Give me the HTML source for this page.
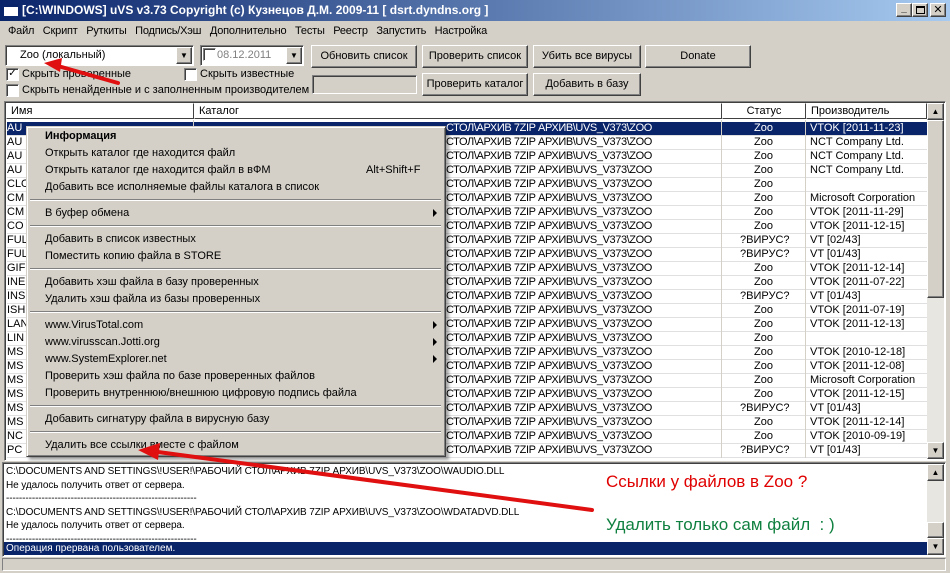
<!DOCTYPE html>
<html><head><meta charset="utf-8"><style>
*{box-sizing:border-box;margin:0;padding:0}
body{width:950px;height:573px;background:#d4d0c8;font-family:"Liberation Sans","DejaVu Sans",sans-serif;font-size:11px;color:#000;position:relative;overflow:hidden}
.a{position:absolute;white-space:nowrap}
.btn{position:absolute;border:1px solid;border-color:#fff #404040 #404040 #fff;box-shadow:inset -1px -1px 0 #808080;text-align:center;background:#d4d0c8}
.sunk{position:absolute;border:1px solid;border-color:#808080 #fff #fff #808080;box-shadow:inset 1px 1px 0 #404040}
.cb{position:absolute;width:13px;height:13px;background:#fff;border:1px solid;border-color:#808080 #fff #fff #808080;box-shadow:inset 1px 1px 0 #404040}
.hd{position:absolute;top:103px;height:16px;border:1px solid;border-color:#fff #404040 #404040 #fff;padding-left:4px;line-height:14px}
.row{position:absolute;left:7px;width:920px;height:14px;line-height:13px;border-bottom:1px solid #e0e0e0}
.row span{position:absolute;top:0}
.row span:nth-child(2){letter-spacing:-0.4px}
.mi{position:absolute;left:45px;line-height:14px}
.sep{position:absolute;left:30px;width:411px;height:2px;border-top:1px solid #808080;border-bottom:1px solid #fff}
.arr{position:absolute;left:433px;width:0;height:0;border-left:4px solid #000;border-top:4px solid transparent;border-bottom:4px solid transparent}
</style></head><body>
<div class="a" style="left:0;top:0;width:950px;height:21px;background:linear-gradient(90deg,#0a246a,#a6caf0)"></div>
<div class="a" style="left:4px;top:4px;width:14px;height:12px;background:#fff;border-top:3px solid #0a246a"></div>
<div class="a" style="left:22px;top:3px;color:#fff;font-weight:bold;font-size:12px">[C:\WINDOWS] uVS v3.73 Copyright (c) Кузнецов Д.М. 2009-11 [ dsrt.dyndns.org ]</div>
<div class="btn" style="left:896px;top:3px;width:16px;height:14px;font-size:10px;line-height:10px;font-weight:bold">_</div>
<div class="btn" style="left:912px;top:3px;width:16px;height:14px"><div style="position:absolute;left:3px;top:2px;width:9px;height:8px;border:1px solid #000;border-top-width:2px"></div></div>
<div class="btn" style="left:930px;top:3px;width:16px;height:14px;font-weight:bold;line-height:12px">✕</div>
<div class="a" style="left:8px;top:25px;word-spacing:0;letter-spacing:-0.2px">Файл&nbsp;&nbsp; Скрипт&nbsp;&nbsp; Руткиты&nbsp;&nbsp; Подпись/Хэш&nbsp;&nbsp; Дополнительно&nbsp;&nbsp; Тесты&nbsp;&nbsp; Реестр&nbsp;&nbsp; Запустить&nbsp;&nbsp; Настройка</div>
<div class="sunk" style="left:5px;top:45px;width:189px;height:21px;background:#fff"></div>
<div class="a" style="left:20px;top:49px">Zoo (локальный)</div>
<div class="btn" style="left:176px;top:47px;width:16px;height:17px;font-size:8px;line-height:15px">▼</div>
<div class="sunk" style="left:200px;top:45px;width:104px;height:21px;background:#fff"></div>
<div class="cb" style="left:203px;top:48px"></div>
<div class="a" style="left:217px;top:49px;color:#808080">08.12.2011</div>
<div class="btn" style="left:286px;top:47px;width:16px;height:17px;font-size:8px;line-height:15px">▼</div>
<div class="btn" style="left:311px;top:45px;width:106px;height:23px;line-height:21px">Обновить список</div>
<div class="btn" style="left:422px;top:45px;width:106px;height:23px;line-height:21px">Проверить список</div>
<div class="btn" style="left:533px;top:45px;width:108px;height:23px;line-height:21px">Убить все вирусы</div>
<div class="btn" style="left:645px;top:45px;width:106px;height:23px;line-height:21px">Donate</div>
<div class="btn" style="left:422px;top:73px;width:106px;height:23px;line-height:21px">Проверить каталог</div>
<div class="btn" style="left:533px;top:73px;width:108px;height:23px;line-height:21px">Добавить в базу</div>
<div class="sunk" style="left:312px;top:75px;width:105px;height:19px"></div>
<div class="cb" style="left:6px;top:68px;font-size:10px;line-height:10px;font-weight:bold;text-align:center">✓</div>
<div class="a" style="left:22px;top:68px">Скрыть проверенные</div>
<div class="cb" style="left:184px;top:68px"></div>
<div class="a" style="left:200px;top:68px">Скрыть известные</div>
<div class="cb" style="left:6px;top:84px"></div>
<div class="a" style="left:22px;top:84px">Скрыть ненайденные и с заполненным производителем</div>
<div class="sunk" style="left:4px;top:101px;width:942px;height:360px;background:#fff"></div>
<div class="hd" style="left:6px;width:188px">Имя</div>
<div class="hd" style="left:194px;width:528px">Каталог</div>
<div class="hd" style="left:722px;width:84px;text-align:center;padding:0">Статус</div>
<div class="hd" style="left:806px;width:121px">Производитель</div>
<div class="a" style="left:927px;top:103px;width:17px;height:356px;background:#e8e6e0"></div>
<div class="btn" style="left:927px;top:103px;width:17px;height:17px;font-size:8px;line-height:15px">▲</div>
<div class="btn" style="left:927px;top:120px;width:17px;height:178px"></div>
<div class="btn" style="left:927px;top:442px;width:17px;height:17px;font-size:8px;line-height:15px">▼</div>
<div class="row" style="top:122px;background:#0a246a;color:#fff"><span style="left:0">AU</span><span style="left:439px">СТОЛ\АРХИВ 7ZIP АРХИВ\UVS_V373\ZOO</span><span style="left:747px">Zoo</span><span style="left:803px">VTOK [2011-11-23]</span></div>
<div class="row" style="top:136px"><span style="left:0">AU</span><span style="left:439px">СТОЛ\АРХИВ 7ZIP АРХИВ\UVS_V373\ZOO</span><span style="left:747px">Zoo</span><span style="left:803px">NCT Company Ltd.</span></div>
<div class="row" style="top:150px"><span style="left:0">AU</span><span style="left:439px">СТОЛ\АРХИВ 7ZIP АРХИВ\UVS_V373\ZOO</span><span style="left:747px">Zoo</span><span style="left:803px">NCT Company Ltd.</span></div>
<div class="row" style="top:164px"><span style="left:0">AU</span><span style="left:439px">СТОЛ\АРХИВ 7ZIP АРХИВ\UVS_V373\ZOO</span><span style="left:747px">Zoo</span><span style="left:803px">NCT Company Ltd.</span></div>
<div class="row" style="top:178px"><span style="left:0">CLO</span><span style="left:439px">СТОЛ\АРХИВ 7ZIP АРХИВ\UVS_V373\ZOO</span><span style="left:747px">Zoo</span></div>
<div class="row" style="top:192px"><span style="left:0">CM</span><span style="left:439px">СТОЛ\АРХИВ 7ZIP АРХИВ\UVS_V373\ZOO</span><span style="left:747px">Zoo</span><span style="left:803px">Microsoft Corporation</span></div>
<div class="row" style="top:206px"><span style="left:0">CM</span><span style="left:439px">СТОЛ\АРХИВ 7ZIP АРХИВ\UVS_V373\ZOO</span><span style="left:747px">Zoo</span><span style="left:803px">VTOK [2011-11-29]</span></div>
<div class="row" style="top:220px"><span style="left:0">CO</span><span style="left:439px">СТОЛ\АРХИВ 7ZIP АРХИВ\UVS_V373\ZOO</span><span style="left:747px">Zoo</span><span style="left:803px">VTOK [2011-12-15]</span></div>
<div class="row" style="top:234px"><span style="left:0">FUL</span><span style="left:439px">СТОЛ\АРХИВ 7ZIP АРХИВ\UVS_V373\ZOO</span><span style="left:733px">?ВИРУС?</span><span style="left:803px">VT [02/43]</span></div>
<div class="row" style="top:248px"><span style="left:0">FUL</span><span style="left:439px">СТОЛ\АРХИВ 7ZIP АРХИВ\UVS_V373\ZOO</span><span style="left:733px">?ВИРУС?</span><span style="left:803px">VT [01/43]</span></div>
<div class="row" style="top:262px"><span style="left:0">GIF</span><span style="left:439px">СТОЛ\АРХИВ 7ZIP АРХИВ\UVS_V373\ZOO</span><span style="left:747px">Zoo</span><span style="left:803px">VTOK [2011-12-14]</span></div>
<div class="row" style="top:276px"><span style="left:0">INE</span><span style="left:439px">СТОЛ\АРХИВ 7ZIP АРХИВ\UVS_V373\ZOO</span><span style="left:747px">Zoo</span><span style="left:803px">VTOK [2011-07-22]</span></div>
<div class="row" style="top:290px"><span style="left:0">INS</span><span style="left:439px">СТОЛ\АРХИВ 7ZIP АРХИВ\UVS_V373\ZOO</span><span style="left:733px">?ВИРУС?</span><span style="left:803px">VT [01/43]</span></div>
<div class="row" style="top:304px"><span style="left:0">ISH</span><span style="left:439px">СТОЛ\АРХИВ 7ZIP АРХИВ\UVS_V373\ZOO</span><span style="left:747px">Zoo</span><span style="left:803px">VTOK [2011-07-19]</span></div>
<div class="row" style="top:318px"><span style="left:0">LAN</span><span style="left:439px">СТОЛ\АРХИВ 7ZIP АРХИВ\UVS_V373\ZOO</span><span style="left:747px">Zoo</span><span style="left:803px">VTOK [2011-12-13]</span></div>
<div class="row" style="top:332px"><span style="left:0">LIN</span><span style="left:439px">СТОЛ\АРХИВ 7ZIP АРХИВ\UVS_V373\ZOO</span><span style="left:747px">Zoo</span></div>
<div class="row" style="top:346px"><span style="left:0">MS</span><span style="left:439px">СТОЛ\АРХИВ 7ZIP АРХИВ\UVS_V373\ZOO</span><span style="left:747px">Zoo</span><span style="left:803px">VTOK [2010-12-18]</span></div>
<div class="row" style="top:360px"><span style="left:0">MS</span><span style="left:439px">СТОЛ\АРХИВ 7ZIP АРХИВ\UVS_V373\ZOO</span><span style="left:747px">Zoo</span><span style="left:803px">VTOK [2011-12-08]</span></div>
<div class="row" style="top:374px"><span style="left:0">MS</span><span style="left:439px">СТОЛ\АРХИВ 7ZIP АРХИВ\UVS_V373\ZOO</span><span style="left:747px">Zoo</span><span style="left:803px">Microsoft Corporation</span></div>
<div class="row" style="top:388px"><span style="left:0">MS</span><span style="left:439px">СТОЛ\АРХИВ 7ZIP АРХИВ\UVS_V373\ZOO</span><span style="left:747px">Zoo</span><span style="left:803px">VTOK [2011-12-15]</span></div>
<div class="row" style="top:402px"><span style="left:0">MS</span><span style="left:439px">СТОЛ\АРХИВ 7ZIP АРХИВ\UVS_V373\ZOO</span><span style="left:733px">?ВИРУС?</span><span style="left:803px">VT [01/43]</span></div>
<div class="row" style="top:416px"><span style="left:0">MS</span><span style="left:439px">СТОЛ\АРХИВ 7ZIP АРХИВ\UVS_V373\ZOO</span><span style="left:747px">Zoo</span><span style="left:803px">VTOK [2011-12-14]</span></div>
<div class="row" style="top:430px"><span style="left:0">NC</span><span style="left:439px">СТОЛ\АРХИВ 7ZIP АРХИВ\UVS_V373\ZOO</span><span style="left:747px">Zoo</span><span style="left:803px">VTOK [2010-09-19]</span></div>
<div class="row" style="top:444px"><span style="left:0">PC</span><span style="left:439px">СТОЛ\АРХИВ 7ZIP АРХИВ\UVS_V373\ZOO</span><span style="left:733px">?ВИРУС?</span><span style="left:803px">VT [01/43]</span></div>
<div class="a" style="left:193px;top:120px;width:1px;height:338px;background:#d4d0c8"></div>
<div class="a" style="left:721px;top:120px;width:1px;height:338px;background:#d4d0c8"></div>
<div class="a" style="left:805px;top:120px;width:1px;height:338px;background:#d4d0c8"></div>
<div class="a" style="left:26px;top:126px;width:420px;height:331px;background:#d4d0c8;border:1px solid;border-color:#d4d0c8 #404040 #404040 #d4d0c8;box-shadow:inset 1px 1px 0 #fff,inset -1px -1px 0 #808080,3px 3px 3px rgba(0,0,0,.35)"></div>
<div class="mi" style="top:129px;font-weight:bold">Информация</div>
<div class="mi" style="top:146px">Открыть каталог где находится файл</div>
<div class="mi" style="top:163px">Открыть каталог где находится файл в вФМ</div>
<div class="a" style="left:366px;top:163px;line-height:14px">Alt+Shift+F</div>
<div class="mi" style="top:180px">Добавить все исполняемые файлы каталога в список</div>
<div class="sep" style="top:199px"></div>
<div class="mi" style="top:206px">В буфер обмена</div><div class="arr" style="top:209px"></div>
<div class="sep" style="top:225px"></div>
<div class="mi" style="top:232px">Добавить в список известных</div>
<div class="mi" style="top:249px">Поместить копию файла в STORE</div>
<div class="sep" style="top:268px"></div>
<div class="mi" style="top:275px">Добавить хэш файла в базу проверенных</div>
<div class="mi" style="top:292px">Удалить хэш файла из базы проверенных</div>
<div class="sep" style="top:311px"></div>
<div class="mi" style="top:318px">www.VirusTotal.com</div><div class="arr" style="top:321px"></div>
<div class="mi" style="top:335px">www.virusscan.Jotti.org</div><div class="arr" style="top:338px"></div>
<div class="mi" style="top:352px">www.SystemExplorer.net</div><div class="arr" style="top:355px"></div>
<div class="mi" style="top:369px">Проверить хэш файла по базе проверенных файлов</div>
<div class="mi" style="top:386px">Проверить внутреннюю/внешнюю цифровую подпись файла</div>
<div class="sep" style="top:405px"></div>
<div class="mi" style="top:412px">Добавить сигнатуру файла в вирусную базу</div>
<div class="sep" style="top:431px"></div>
<div class="mi" style="top:438px">Удалить все ссылки вместе с файлом</div>
<div class="sunk" style="left:2px;top:462px;width:944px;height:95px;background:#fff"></div>
<div class="a" style="left:6px;top:465px;font-size:10px;line-height:13.6px;letter-spacing:-0.1px">C:\DOCUMENTS AND SETTINGS\!USER!\РАБОЧИЙ СТОЛ\АРХИВ 7ZIP АРХИВ\UVS_V373\ZOO\WAUDIO.DLL<br>Не удалось получить ответ от сервера.<br>-----------------------------------------------------------<br>C:\DOCUMENTS AND SETTINGS\!USER!\РАБОЧИЙ СТОЛ\АРХИВ 7ZIP АРХИВ\UVS_V373\ZOO\WDATADVD.DLL<br>Не удалось получить ответ от сервера.<br>-----------------------------------------------------------</div>
<div class="a" style="left:4px;top:542px;width:923px;height:13px;background:#0a246a;color:#fff;font-size:10px;line-height:13px;padding-left:2px">Операция прервана пользователем.</div>
<div class="a" style="left:927px;top:464px;width:17px;height:91px;background:#e8e6e0"></div>
<div class="btn" style="left:927px;top:464px;width:17px;height:17px;font-size:8px;line-height:15px">▲</div>
<div class="btn" style="left:927px;top:538px;width:17px;height:17px;font-size:8px;line-height:15px">▼</div>
<div class="btn" style="left:927px;top:522px;width:17px;height:16px"></div>
<div class="a" style="left:606px;top:472px;color:#e00000;font-size:17px">Ссылки у файлов в Zoo ?</div>
<div class="a" style="left:606px;top:515px;color:#108040;font-size:17px">Удалить только сам файл&nbsp; : )</div>
<div class="sunk" style="left:2px;top:558px;width:944px;height:13px;box-shadow:none"></div>
<svg class="a" style="left:0;top:0" width="950" height="573">
<path d="M118 83 L58 66" stroke="#e01010" stroke-width="4" stroke-linecap="round"/>
<path d="M44 63 L62 58 L60 72 Z" fill="#e01010"/>
<path d="M592 510 L158 452" stroke="#e01010" stroke-width="4" stroke-linecap="round"/>
<path d="M138 450 L160 443 L158 460 Z" fill="#e01010"/>
</svg>
</body></html>
